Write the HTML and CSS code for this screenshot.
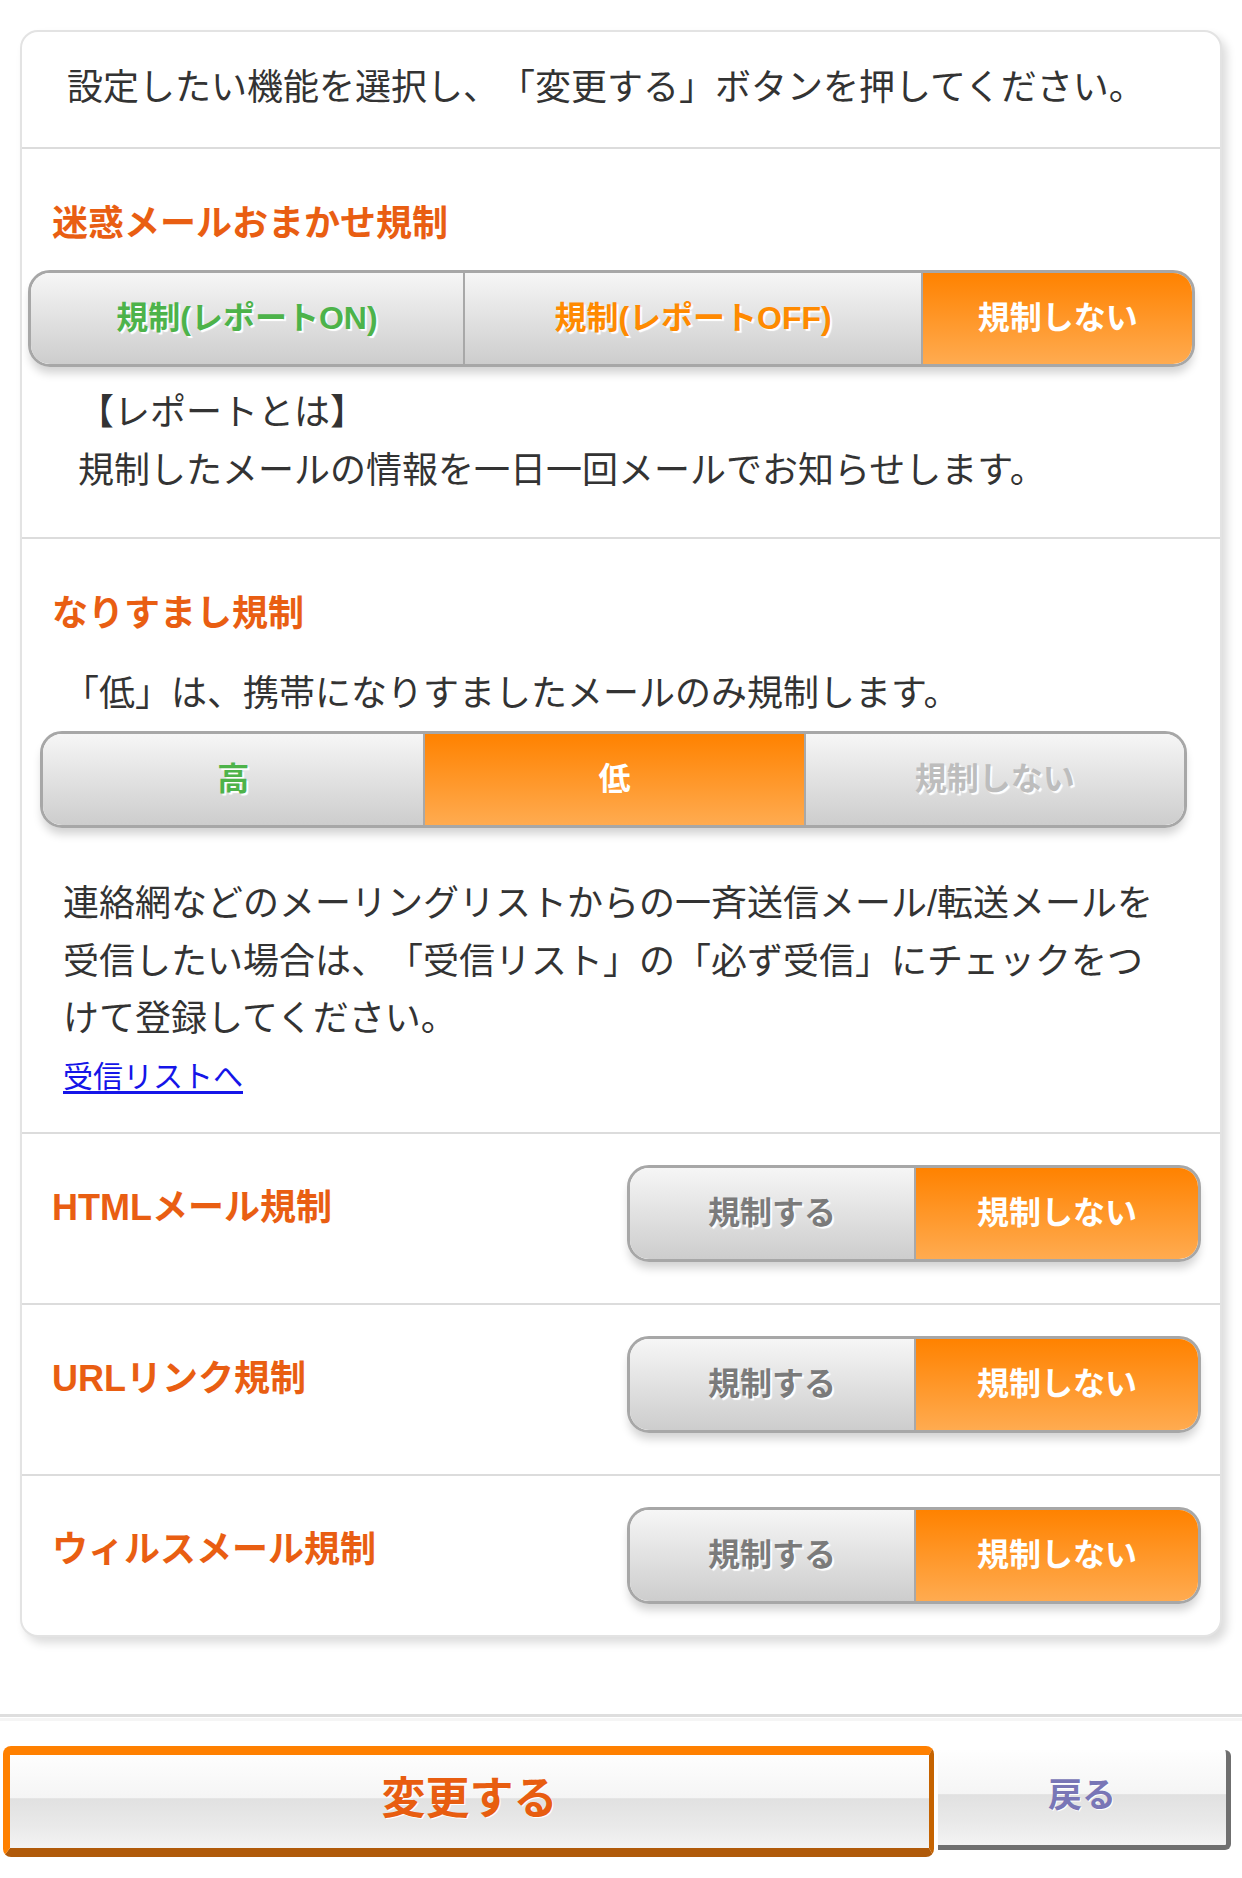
FILE: index.html
```html
<!DOCTYPE html>
<html lang="ja">
<head>
<meta charset="utf-8">
<title>迷惑メール設定</title>
<link rel="stylesheet" href="styles.css">
</head>
<body>
<div class="card">
  <div class="intro">設定したい機能を選択し、「変更する」ボタンを押してください。</div>

  <section class="sec sec-spam">
    <h2 class="ttl">迷惑メールおまかせ規制</h2>
    <div class="seg seg-spam">
      <span class="opt green">規制(レポートON)</span>
      <span class="opt orange">規制(レポートOFF)</span>
      <span class="opt on">規制しない</span>
    </div>
    <p class="note">【レポートとは】<br>規制したメールの情報を一日一回メールでお知らせします。</p>
  </section>

  <section class="sec sec-spoof">
    <h2 class="ttl">なりすまし規制</h2>
    <p class="lead">「低」は、携帯になりすましたメールのみ規制します。</p>
    <div class="seg seg-spoof">
      <span class="opt green">高</span>
      <span class="opt on">低</span>
      <span class="opt light">規制しない</span>
    </div>
    <p class="para">連絡網などのメーリングリストからの一斉送信メール/転送メールを<br>受信したい場合は、「受信リスト」の「必ず受信」にチェックをつ<br>けて登録してください。</p>
    <a class="link" href="#">受信リストへ</a>
  </section>

  <div class="row">
    <h2 class="ttl">HTMLメール規制</h2>
    <div class="seg seg-two">
      <span class="opt gray">規制する</span>
      <span class="opt on">規制しない</span>
    </div>
  </div>

  <div class="row">
    <h2 class="ttl">URLリンク規制</h2>
    <div class="seg seg-two">
      <span class="opt gray">規制する</span>
      <span class="opt on">規制しない</span>
    </div>
  </div>

  <div class="row row-last">
    <h2 class="ttl">ウィルスメール規制</h2>
    <div class="seg seg-two">
      <span class="opt gray">規制する</span>
      <span class="opt on">規制しない</span>
    </div>
  </div>
</div>

<div class="rule"></div>

<div class="actions">
  <button class="btn btn-submit" type="button">変更する</button>
  <button class="btn btn-back" type="button">戻る</button>
</div>
</body>
</html>
```

FILE: styles.css
```css
* {
  box-sizing: border-box;
  margin: 0;
  padding: 0;
}

body {
  background: #fff;
  color: #333;
  font-family: "Liberation Sans", "Noto Sans CJK JP", sans-serif;
  width: 1242px;
  text-spacing-trim: space-all;
}

.card {
  margin: 30px 20px 0;
  border: 2px solid #e3e3e3;
  border-radius: 18px;
  background: #fff;
  box-shadow: 5px 6px 10px rgba(0, 0, 0, 0.14);
  overflow: hidden;
}

.intro {
  padding: 34px 20px 37px 45px;
  font-size: 36px;
  line-height: 44px;
  border-bottom: 2px solid #dcdcdc;
}

.sec {
  padding: 53px 0 39px;
  border-bottom: 2px solid #dcdcdc;
}

.sec-spam {
  padding-bottom: 37px;
}

.sec-spoof {
  padding-bottom: 29px;
}

.ttl {
  padding-left: 30px;
  font-size: 36px;
  line-height: 44px;
  font-weight: 700;
  color: #e95e12;
}

.sec .ttl {
  margin-bottom: -2px;
}

/* segmented controls */
.seg {
  display: grid;
  height: 97px;
  border: 3px solid #a7a7a7;
  border-radius: 22px;
  overflow: hidden;
  box-shadow: 0 8px 10px -2px rgba(0, 0, 0, 0.18);
}

.seg-spam {
  grid-template-columns: 434fr 461fr 272fr;
  margin: 26px 25px 0 6px;
}

.seg-spoof {
  grid-template-columns: 1fr 1fr 1fr;
  margin: 10px 33px 0 18px;
}

.seg-two {
  grid-template-columns: 1fr 1fr;
  width: 574px;
  flex: none;
}

.opt {
  display: flex;
  align-items: center;
  justify-content: center;
  padding-bottom: 7px;
  font-size: 32px;
  font-weight: 700;
  white-space: nowrap;
  background: linear-gradient(#f6f6f6, #cdcdcd);
  border-left: 2px solid #a8a8a8;
  text-shadow: 2px 2px 1px #fff;
}

.opt:first-child {
  border-left: 0;
}

.opt.green { color: #4db34a; }
.opt.orange { color: #ff8a00; }
.opt.gray { color: #7b7b7b; }
.opt.light { color: #bdbdbd; }

.opt.on {
  color: #fff;
  background: linear-gradient(#ff8200, #ffab50);
  text-shadow: none;
}

.note {
  margin-top: 17px;
  padding-left: 56px;
  font-size: 36px;
  line-height: 58px;
}

.lead {
  margin-top: 31px;
  margin-bottom: -2px;
  padding-left: 41px;
  font-size: 36px;
  line-height: 58px;
}

.para {
  margin-top: 47px;
  padding-left: 41px;
  font-size: 36px;
  line-height: 57.5px;
  white-space: nowrap;
}

.link {
  display: inline-block;
  margin-left: 41px;
  margin-bottom: -2px;
  font-size: 30px;
  line-height: 57.5px;
  color: #1515e8;
  text-decoration: underline;
  text-underline-offset: 4px;
}

/* single-line rows */
.row {
  display: flex;
  align-items: center;
  justify-content: space-between;
  padding: 31px 19px 41px 0;
  border-bottom: 2px solid #dcdcdc;
}

.row .ttl {
  margin-bottom: 11px;
}

.row-last {
  padding-bottom: 31px;
  border-bottom: 0;
}

/* footer */
.rule {
  margin-top: 77px;
  height: 3px;
  background: #dedede;
  box-shadow: 0 4px 0 #f5f5f5;
}

.actions {
  display: flex;
  align-items: flex-start;
  margin-top: 29px;
  padding-left: 3px;
}

.btn {
  font-family: inherit;
  font-weight: 700;
  cursor: pointer;
  background: linear-gradient(#fefefe 0%, #f5f5f5 46%, #e1e1e1 47%, #e9e9e9 75%, #f3f3f3 100%);
}

.btn-submit {
  width: 931px;
  height: 111px;
  padding-bottom: 14px;
  border-style: solid;
  border-width: 9px 5px 9px 7px;
  border-color: #ff8000 #c56300 #b05a0a #ff8000;
  border-radius: 8px;
  font-size: 44px;
  color: #e85d10;
  text-shadow: 1px 1px 0 #fff;
}

.btn-back {
  width: 293px;
  height: 100px;
  margin: 4px 0 0 4px;
  padding-bottom: 10px;
  border: 0;
  border-right: 5px solid #6f6f6f;
  border-bottom: 5px solid #6f6f6f;
  border-radius: 0 6px 6px 0;
  font-size: 34px;
  color: #7976b6;
  text-shadow: 1px 1px 0 #fff;
}
```
